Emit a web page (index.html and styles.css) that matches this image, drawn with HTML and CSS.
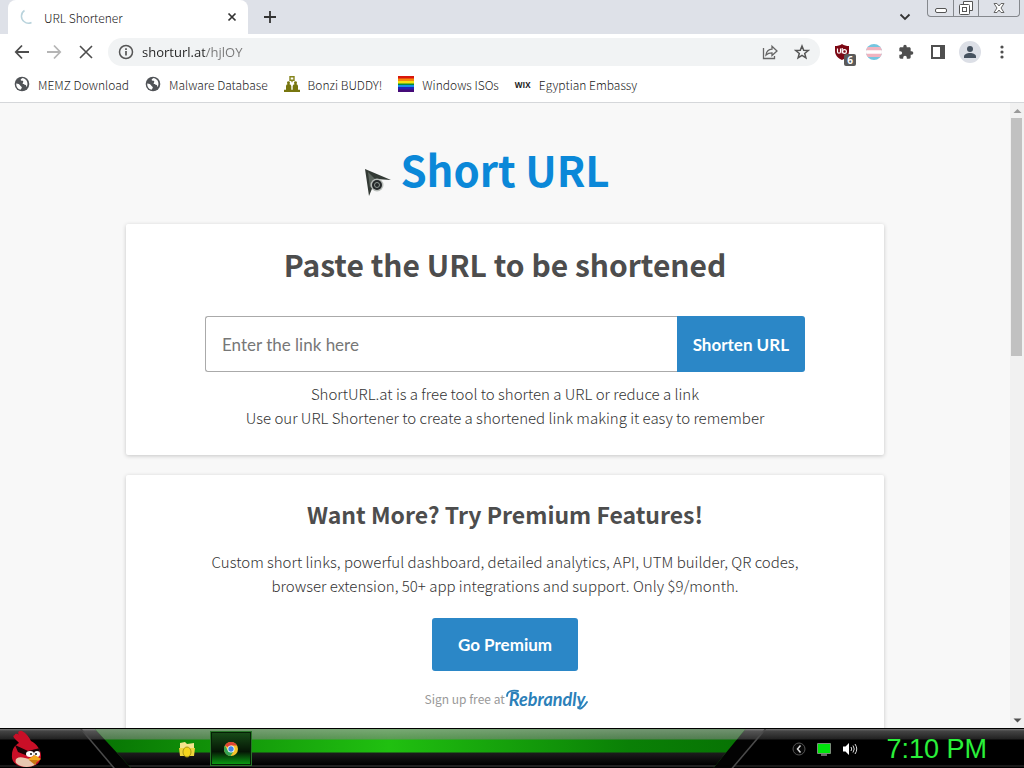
FILE: index.html
```html
<!DOCTYPE html>
<html lang="en">
<head>
    <meta charset="UTF-8">
    <meta name="viewport" content="width=device-width, initial-scale=1.0">
    <title>URL Shortener</title>
    <link rel="stylesheet" href="styles.css">
</head>
<body>
    <header class="browser">
        <div class="tab-strip">
            <div class="tab">
                <svg class="spinner" width="16" height="16" viewBox="0 0 16 16"><path d="M4.500 1.500C.5 4 .5 10 4 12.500 6 14.300 9 14.800 11.500 13.500" fill="none" stroke="#b9d3dc" stroke-width="1.500"/></svg>
                <span class="tab-title">URL Shortener</span>
                <button class="icon-btn tab-close" aria-label="Close tab">
                    <svg width="10" height="10" viewBox="0 0 10 10"><path d="M1.500 1.500l7 7M8.500 1.500l-7 7" stroke="#333" stroke-width="1.700"/></svg>
                </button>
            </div>
            <button class="icon-btn new-tab" aria-label="New tab">
                <svg width="12" height="12" viewBox="0 0 12 12"><path d="M6 0v12M0 6h12" stroke="#333" stroke-width="1.800"/></svg>
            </button>
            <button class="icon-btn tab-search" aria-label="Search tabs">
                <svg width="12" height="8" viewBox="0 0 12 8"><path d="M1.500 1.500L6 6l4.500-4.500" fill="none" stroke="#333" stroke-width="1.800"/></svg>
            </button>
            <div class="window-buttons">
                <button aria-label="Minimize"><svg width="14" height="14" viewBox="0 0 14 14"><rect x="1.500" y="7.500" width="11" height="4" rx="1.500" fill="#fff" stroke="#555"/></svg></button>
                <button aria-label="Restore"><svg width="14" height="14" viewBox="0 0 14 14"><path d="M4.500 3.500v-3h9v9h-3" fill="#fff" stroke="#555"/><rect x=".5" y="3.500" width="10" height="10" rx="1" fill="#fff" stroke="#555"/><rect x="3.500" y="6.500" width="4" height="4" fill="none" stroke="#555"/></svg></button>
                <button aria-label="Close"><svg width="14" height="14" viewBox="0 0 14 14"><path d="M2 2.500h3l2 2.500 2-2.500h3L9 7l3 4.500H9L7 9l-2 2.500H2L5 7z" fill="#fff" stroke="#666"/></svg></button>
            </div>
        </div>

        <div class="toolbar">
            <button class="icon-btn" aria-label="Back"><svg width="16" height="16" viewBox="0 0 16 16"><path d="M15 8H2M8 1.500L1.800 8 8 14.500" fill="none" stroke="#4d4d4d" stroke-width="1.800"/></svg></button>
            <button class="icon-btn" aria-label="Forward"><svg width="16" height="16" viewBox="0 0 16 16"><path d="M1 8h13M8 1.500L14.200 8 8 14.500" fill="none" stroke="#b5b5b5" stroke-width="1.800"/></svg></button>
            <button class="icon-btn" aria-label="Stop"><svg width="16" height="16" viewBox="0 0 16 16"><path d="M2 2l12 12M14 2L2 14" stroke="#4d4d4d" stroke-width="1.600"/></svg></button>
            <div class="address-bar">
                <svg width="16" height="16" viewBox="0 0 16 16"><circle cx="8" cy="8" r="6.500" fill="none" stroke="#555" stroke-width="1.500"/><path d="M8 7v4.500M8 4.200V6" stroke="#555" stroke-width="1.700"/></svg>
                <input class="address" type="text" aria-label="Address" value="shorturl.at/hjlOY">
                <button class="icon-btn" aria-label="Share"><svg width="16" height="16" viewBox="0 0 16 16"><path d="M1.500 4v10.500h11V12" fill="none" stroke="#666" stroke-width="1.300"/><path d="M4 11c.5-4 2.500-5.700 6-5.900V2.200L15 7l-5 4.600V8.800C7.500 8.800 5.500 9.500 4 11z" fill="none" stroke="#666" stroke-width="1.300"/></svg></button>
                <button class="icon-btn" aria-label="Bookmark this page"><svg width="16" height="16" viewBox="0 0 16 16"><path d="M8 2l1.700 4.200 4.500.3-3.500 2.900 1.200 4.400L8 11.400l-3.900 2.400 1.200-4.400-3.500-2.900 4.500-.3z" fill="none" stroke="#555" stroke-width="1.500"/></svg></button>
            </div>
            <div class="extensions">
                <button class="icon-btn shield" aria-label="uBlock Origin">
                    <svg width="16" height="16" viewBox="0 0 16 16"><path d="M8 0c2 1.500 4.500 2 7 2v5c0 4.500-3 7-7 9-4-2-7-4.500-7-9V2c2.500 0 5-.5 7-2z" fill="#7c0713"/><path d="M3.500 4.500v3.200q0 1.500 1.500 1.500t1.500-1.500V4.500M8.200 4v5.200" fill="none" stroke="#fff" stroke-width="1.200"/><circle cx="10.500" cy="7.500" r="1.900" fill="none" stroke="#fff" stroke-width="1.200"/></svg>
                    <span class="badge">6</span>
                </button>
                <button class="icon-btn" aria-label="Flag extension"><svg width="16" height="16" viewBox="0 0 16 16"><clipPath id="disc"><circle cx="8" cy="8" r="8"/></clipPath><g clip-path="url(#disc)"><path fill="#74c6e0" d="M0 0h16v16H0z"/><path fill="#f0b4c0" d="M0 3h16v10H0z"/><path fill="#fff" d="M0 6.300h16v3.400H0z"/></g></svg></button>
                <button class="icon-btn" aria-label="Extensions"><svg width="16" height="16" viewBox="0 0 24 24"><path fill="#4f4f4f" d="M20.500 11H19V7c0-1.100-.9-2-2-2h-4V3.500a2.500 2.500 0 0 0-5 0V5H4c-1.100 0-2 .9-2 2v3.800h1.500a2.700 2.700 0 0 1 0 5.400H2V20c0 1.100.9 2 2 2h3.800v-1.500a2.700 2.700 0 0 1 5.400 0V22H17c1.100 0 2-.9 2-2v-4h1.500a2.500 2.500 0 0 0 0-5z"/></svg></button>
                <button class="icon-btn" aria-label="Side panel"><svg width="16" height="16" viewBox="0 0 16 16"><path d="M1 1h14v14H1zM3 3v10h7V3z" fill="#4f4f4f" fill-rule="evenodd"/></svg></button>
                <button class="icon-btn profile" aria-label="Profile"><svg width="22" height="22" viewBox="0 0 22 22"><circle cx="11" cy="11" r="11" fill="#dcdfe6"/><circle cx="11" cy="8" r="3" fill="#46525f"/><path d="M5 17v-1.500c0-2 3-3.500 6-3.500s6 1.500 6 3.500V17z" fill="#46525f"/></svg></button>
                <button class="icon-btn" aria-label="Menu"><svg width="16" height="16" viewBox="0 0 16 16"><g fill="#4f4f4f"><circle cx="8" cy="3" r="1.600"/><circle cx="8" cy="8" r="1.600"/><circle cx="8" cy="13" r="1.600"/></g></svg></button>
            </div>
        </div>

        <nav class="bookmarks">
            <a href="#"><svg width="16" height="16" viewBox="0 0 16 16"><circle cx="8" cy="8" r="7.300" fill="#505357"/><path d="M2.200 7.500c2 .2 3.500.8 4 2 .3 1 1.800.8 1.600 2.300-.2 1-1 1-1.200 2C3.500 13 2 10.500 2.200 7.500zM8.800 2c-1.500.5-2.500 1.300-2 2.300s2-.2 2.400 1c.4 1.400-1 1.700-.4 2.700.7 1 2 .3 3 1.100.6.500.3 1.400.8 1.900 1.600-2.500 1.400-7.500-3.800-9z" fill="#fff"/></svg>MEMZ Download</a>
            <a href="#"><svg width="16" height="16" viewBox="0 0 16 16"><circle cx="8" cy="8" r="7.300" fill="#505357"/><path d="M2.200 7.500c2 .2 3.500.8 4 2 .3 1 1.800.8 1.600 2.300-.2 1-1 1-1.200 2C3.500 13 2 10.500 2.200 7.500zM8.800 2c-1.500.5-2.500 1.300-2 2.300s2-.2 2.400 1c.4 1.400-1 1.700-.4 2.700.7 1 2 .3 3 1.100.6.500.3 1.400.8 1.900 1.600-2.500 1.400-7.500-3.800-9z" fill="#fff"/></svg>Malware Database</a>
            <a href="#"><svg width="16" height="16" viewBox="0 0 16 16"><g fill="#77760f"><path d="M0 16v-2.200h2V10q.2-1.500 1.500-1.700Q2.200 5.500 4.500 5.300 6.800 5.500 5.500 8.300 7 8.500 7.300 10v3.800h1.400V10q.3-1.500 1.800-1.700-1.300-2.800 1-3 2.300.2 1 3Q13.800 8.500 14 10v3.800h2V16z"/></g><path d="M6 .8h4v3.400H8.500L8 5.200l-.5-1H6z" fill="none" stroke="#85841c" stroke-width="1.400"/></svg>Bonzi BUDDY!</a>
            <a href="#"><svg width="16" height="16" viewBox="0 0 16 16"><path fill="#d9160c" d="M0 0h16v3H0z"/><path fill="#f58a0b" d="M0 2.500h16v3H0z"/><path fill="#f2e40f" d="M0 5h16v3H0z"/><path fill="#078c35" d="M0 7.500h16v3H0z"/><path fill="#1590e8" d="M0 9h16v2H0z"/><path fill="#2222b4" d="M0 11h16v3H0z"/><path fill="#450b78" d="M0 13.500h16V16H0z"/></svg>Windows ISOs</a>
            <a href="#"><span class="wix">WIX</span>Egyptian Embassy</a>
        </nav>
    </header>

    <div class="viewport">
        <main class="page">
            <h1>Short URL</h1>
            <section class="card">
                <h2>Paste the URL to be shortened</h2>
                <form class="shorten-form">
                    <input type="text" class="link-input" aria-label="Link to shorten" placeholder="Enter the link here">
                    <button type="button" class="btn shorten-btn">Shorten URL</button>
                </form>
                <p>ShortURL.at is a free tool to shorten a URL or reduce a link<br>Use our URL Shortener to create a shortened link making it easy to remember</p>
            </section>
            <section class="card premium">
                <h3>Want More? Try Premium Features!</h3>
                <p>Custom short links, powerful dashboard, detailed analytics, API, UTM builder, QR codes,<br>browser extension, 50+ app integrations and support. Only $9/month.</p>
                <button type="button" class="btn premium-btn">Go Premium</button>
                <div class="signup">Sign up free at
                    <a href="#" class="rebrandly">Rebrandly<svg class="swash" width="82" height="24" viewBox="0 0 82 24"><path d="M1 9C1 4 6 3 12 4M72 20c1 4 6 0 9-5" fill="none" stroke="#2b80b9" stroke-width="1.800" stroke-linecap="round"/></svg></a>
                </div>
            </section>
        </main>
        <div class="scrollbar">
            <svg width="14" height="15" viewBox="0 0 14 15"><path d="M3.500 10L7.500 6l4 4z" fill="#999"/></svg>
            <div class="thumb"></div>
            <svg class="down" width="14" height="15" viewBox="0 0 14 15"><path d="M3.500 5.500h8l-4 4z" fill="#505050"/></svg>
        </div>
        <svg class="cursor" width="32" height="32" viewBox="0 0 32 32">
            <path d="M1 1l26 11-15-1-7 17z" fill="#333a35"/>
            <path d="M4 4l7 7-5 9z" fill="#5d665f"/>
            <circle cx="13" cy="17" r="6.500" fill="#b9beba"/>
            <circle cx="13" cy="17" r="5" fill="#25292a"/>
            <circle cx="13" cy="17" r="2.500" fill="none" stroke="#8f9993"/>
        </svg>
    </div>

    <footer class="taskbar">
        <button class="start" aria-label="Start">
            <svg width="36" height="38" viewBox="0 0 36 38">
                <path d="M9 13C5 9 1 6 5 5 4 4 7 3 9 5 7 2 9 0 12 1c4 2 7 6 9 10 6 3 10 9 10 15 0 7-6 11-15 11S1 32 2 25c0-6 3-10 7-12z" fill="#c90f27"/>
                <path d="M6 33c-2-5 3-7 9-5 6 1 11 4 11 6-5 4-15 4-20-1z" fill="#e8c7b0"/>
                <path d="M5 15l13 6 12-3-1 7-11 1-10-4z" fill="#160406"/>
                <ellipse cx="20" cy="24" rx="4" ry="3" fill="#fff"/>
                <ellipse cx="27" cy="24" rx="3" ry="3" fill="#fff"/>
                <circle cx="21" cy="24" r="1" fill="#111"/><circle cx="26" cy="24" r="1" fill="#111"/>
                <path d="M18 29l7-4 6 4-6 4z" fill="#f4a91c"/><path d="M19 30h9l-3 5z" fill="#c97812"/>
            </svg>
        </button>
        <div class="band">
            <div class="green"></div>
            <div class="tasks">
                <button class="task" aria-label="File Explorer"><svg width="18" height="18" viewBox="0 0 18 18"><path d="M2 3l5-1 2 2 7-1v12H2z" fill="#f5e48e"/><path d="M1 8h6l2-1 2 1h6l-1 8H2z" fill="#eed43c"/><ellipse cx="9" cy="12" rx="4" ry="5" fill="#f5d51c" stroke="#a99615"/></svg></button>
                <button class="task active" aria-label="Google Chrome"><svg width="14" height="14" viewBox="0 0 14 14"><circle cx="7" cy="7" r="7" fill="#f5c32c"/><path d="M7 7L.9 3.500A7 7 0 0 1 13.100 3.500H7z" fill="#df4436"/><path d="M.9 3.500A7 7 0 0 0 6.500 14L10 8.800 4 8.800z" fill="#35a352"/><circle cx="7" cy="7" r="3.500" fill="#fff"/><circle cx="7" cy="7" r="2.700" fill="#4285e8"/></svg></button>
            </div>
        </div>
        <div class="tray">
            <svg width="14" height="14" viewBox="0 0 14 14"><circle cx="7" cy="7" r="6" fill="#080808" stroke="#555"/><path d="M8.500 3.500L5.500 7l3 3.500" fill="none" stroke="#ddd" stroke-width="1.500"/></svg>
            <svg width="14" height="14" viewBox="0 0 14 14"><path d="M.5 1.500h13v10H.5z" fill="#00e40c" stroke="#7b8c7b"/><path d="M4 13h6" stroke="#888" stroke-width="1.500"/></svg>
            <svg width="16" height="14" viewBox="0 0 16 14"><path d="M1 4.500h2.500L7 1v12L3.500 9.500H1z" fill="#fff"/><path d="M9 5q1.500 2 0 4M11 3.500q2.500 3.500 0 7M13 2q3.500 5 0 10" fill="none" stroke="#ddd"/></svg>
        </div>
        <time class="clock">7:10 PM</time>
    </footer>
</body>
</html>
```
FILE: styles.css
```css
* {
    box-sizing: border-box;
}
body {
    margin: 0;
    height: 100vh;
    display: flex;
    flex-direction: column;
    overflow: hidden;
    font-family: "Noto Sans CJK SC", sans-serif;
    color: #4d4d4d;
}
button {
    font: inherit;
    border: 0;
    padding: 0;
    cursor: pointer;
}
svg {
    display: block;
    flex: none;
}

/* browser window */
.browser {
    background: #fff;
    border-bottom: 1px solid #d5d7da;
    color: #222;
    font-size: 12px;
    font-weight: 300;
}
.icon-btn {
    background: none;
    display: flex;
    align-items: center;
    justify-content: center;
}
.tab-strip {
    display: flex;
    align-items: center;
    height: 34px;
    padding-left: 8px;
    background: #dee1e8;
}
.tab {
    display: flex;
    align-items: center;
    gap: 8px;
    width: 240px;
    height: 34px;
    padding: 0 11px 0 12px;
    background: #fff;
    border-radius: 8px 8px 0 0;
}
.tab-title {
    flex: 1;
}
.new-tab {
    margin-left: 16px;
}
.tab-search {
    margin-left: auto;
    margin-right: 16px;
}
.window-buttons {
    display: flex;
    align-self: flex-start;
    margin-right: 4px;
    border: 1px solid #85888d;
    border-top: 0;
    border-radius: 0 0 4px 4px;
}
.window-buttons button {
    display: flex;
    align-items: center;
    justify-content: center;
    width: 25px;
    height: 16px;
    background: none;
}
.window-buttons button + button {
    border-left: 1px solid #85888d;
}
.window-buttons button:last-child {
    width: 41px;
}
.toolbar {
    display: flex;
    align-items: center;
    gap: 16px;
    height: 36px;
    padding: 0 14px;
}
.address-bar {
    flex: 1;
    display: flex;
    align-items: center;
    gap: 16px;
    height: 28px;
    margin: 0 -2px;
    padding: 0 10px;
    border-radius: 14px;
    background: #f1f3f4;
}
.address {
    flex: 1;
    min-width: 0;
    height: 20px;
    margin-left: -8px;
    padding: 0;
    border: 0;
    outline: 0;
    font-family: "Open Sans", sans-serif;
    font-size: 13px;
    /* host name dark, path grey */
    background: linear-gradient(90deg, #222 63px, #777 63px);
    background-clip: text;
    -webkit-background-clip: text;
    color: transparent;
}
.extensions {
    display: flex;
    align-items: center;
    gap: 16px;
}
.shield {
    position: relative;
}
.badge {
    position: absolute;
    left: 10px;
    top: 10px;
    width: 12px;
    height: 12px;
    border-radius: 2px;
    background: #5a5a5a;
    color: #fff;
    font-family: "Open Sans", sans-serif;
    font-size: 10px;
    font-weight: bold;
    line-height: 12px;
}
.profile {
    margin: 0 -3px;
}
.bookmarks {
    display: flex;
    align-items: center;
    gap: 16px;
    height: 32px;
    padding: 0 14px 4px;
}
.bookmarks a {
    display: flex;
    align-items: center;
    gap: 8px;
    color: #222;
    text-decoration: none;
}
.wix {
    width: 16px;
    color: #222;
    font-family: "Open Sans", sans-serif;
    font-size: 8px;
    font-weight: bold;
}

/* page */
.viewport {
    flex: 1;
    min-height: 0;
    display: flex;
    position: relative;
    background: #f8f8f8;
}
.page {
    flex: 1;
    display: flex;
    flex-direction: column;
    align-items: center;
    overflow: hidden;
    text-align: center;
}
h1 {
    margin: 36px 0 25px;
    color: #0b88d8;
    font-size: 42px;
    line-height: 60px;
}
.card {
    width: 75%;
    flex: none;
    margin-bottom: 20px;
    padding: 18px 0 25px;
    background: #fff;
    border-radius: 2px;
    box-shadow: 0 1px 4px rgba(0, 0, 0, 0.2);
}
.card h2 {
    margin: 0;
    font-size: 30px;
    line-height: 44px;
}
.card h3 {
    margin: 0 0 15px;
    font-size: 23px;
    line-height: 42px;
}
.card p {
    margin: 0;
    color: #333;
    font-size: 15px;
    font-weight: 300;
    line-height: 24px;
}
.shorten-form {
    display: flex;
    max-width: 600px;
    height: 56px;
    margin: 30px auto 10px;
}
.link-input {
    flex: 1;
    min-width: 0;
    padding: 0 16px;
    border: 1px solid #aaa;
    border-right: 0;
    border-radius: 3px 0 0 3px;
    font-family: Lato, sans-serif;
    font-size: 17px;
}
.link-input::placeholder {
    color: #777;
}
.btn {
    background: #2b87c7;
    color: #fff;
    font-family: Lato, sans-serif;
    font-size: 17px;
    font-weight: bold;
    border-radius: 3px;
}
.shorten-btn {
    padding: 0 16px;
    border-radius: 0 3px 3px 0;
}
.premium-btn {
    margin: 20px 0 16px;
    padding: 0 26px;
    height: 53px;
}
.signup {
    display: flex;
    align-items: center;
    justify-content: center;
    gap: 4px;
    color: #999;
    font-size: 12px;
    line-height: 24px;
}
.rebrandly {
    position: relative;
    color: #2b80b9;
    font-family: Lato, sans-serif;
    font-size: 18px;
    font-style: italic;
    font-weight: bold;
    text-decoration: none;
}
.swash {
    position: absolute;
    left: -3px;
    top: 0;
}
.scrollbar {
    display: flex;
    flex-direction: column;
    width: 14px;
    background: #f1f1f1;
}
.thumb {
    height: 38%;
    margin: 0 2px 0 1px;
    background: #c1c1c1;
}
.down {
    margin-top: auto;
}
.cursor {
    position: absolute;
    left: 364px;
    top: 65px;
}

/* taskbar */
.taskbar {
    display: flex;
    align-items: center;
    height: 40px;
    border-top: 1px solid #000;
    background: linear-gradient(#777 0, #444 2px, #222 10px, #000 11px, #000 36px, #333 37px, #000 38px);
}
.start {
    width: 80px;
    padding-left: 10px;
    background: none;
}
.band {
    flex: 1;
    align-self: stretch;
    display: flex;
    position: relative;
    background: #4a4a4a;
    clip-path: polygon(0 0, 100% 0, calc(100% - 33px) 100%, 33px 100%);
}
/* dark glass inside the thin grey edge */
.band::before {
    content: "";
    position: absolute;
    inset: 0 2px;
    background: linear-gradient(#888 0, #555 2px, #333 10px, #030303 11px);
    clip-path: polygon(0 0, 100% 0, calc(100% - 33px) 100%, 33px 100%);
}
.green {
    position: absolute;
    inset: 0 1px;
    background:
        linear-gradient(rgba(160, 160, 160, 0.7) 0, rgba(130, 130, 130, 0.6) 10px, transparent 11px, transparent 23px, #1c1c1c 24px, #000 36px, #444 37px, #000 38px),
        linear-gradient(90deg, #067003, #20c010 45%, #0a8006 80%, #067003);
    clip-path: polygon(14px 0, calc(100% - 20px) 0, calc(100% - 52px) 100%, 50px 100%);
}
.tasks {
    display: flex;
    position: relative;
    padding: 3px 0 3px 87px;
}
.task {
    display: flex;
    align-items: center;
    justify-content: center;
    width: 40px;
    background: none;
}
.task.active {
    margin-left: 4px;
    border: 1px solid #061f06;
    outline: 1px solid #287528;
    background: linear-gradient(#174a17, #051505 60%, #0a9a12);
}
.tray {
    display: flex;
    align-items: center;
    gap: 11px;
    margin-left: 26px;
}
.clock {
    margin: 2px 37px 0 28px;
    color: #2af03a;
    font-family: "Liberation Sans", sans-serif;
    font-size: 27px;
}
```
